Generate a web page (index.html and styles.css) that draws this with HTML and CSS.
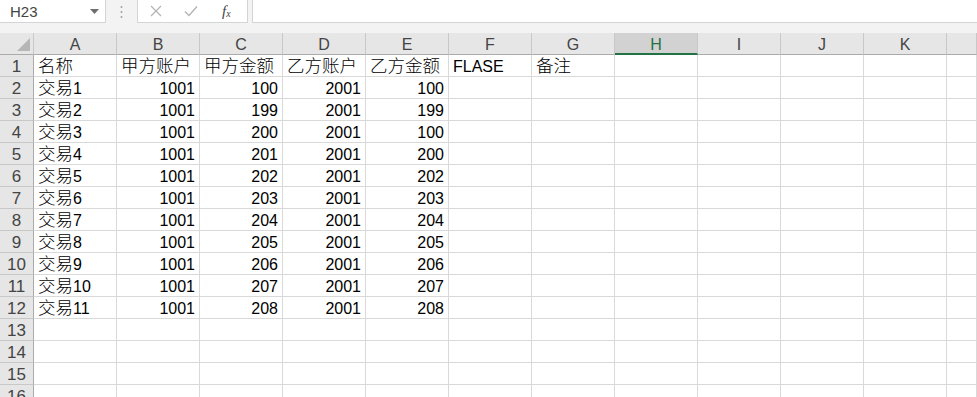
FILE: index.html
```html
<!DOCTYPE html>
<html lang="zh-CN">
<head>
    <meta charset="UTF-8">
    <meta name="viewport" content="width=device-width, initial-scale=1.0">
    <title>交易表 - Excel</title>
    <link rel="stylesheet" href="styles.css">
</head>
<body>
    <div class="formula-bar">
        <div class="name-box">
            <span class="name-text">H23</span>
            <svg class="drop" width="9" height="6" viewBox="0 0 9 6"><path d="M0 0h9L4.5 5z" fill="#6e6e6e"/></svg>
        </div>
        <div class="grip">
            <svg width="3" height="14" viewBox="0 0 3 14"><circle cx="1.5" cy="2" r="1" fill="#a0a0a0"/><circle cx="1.5" cy="7" r="1" fill="#a0a0a0"/><circle cx="1.5" cy="12" r="1" fill="#a0a0a0"/></svg>
        </div>
        <div class="fx-box">
            <svg class="btn" width="12" height="12" viewBox="0 0 12 12"><path d="M1 1l10 10M11 1L1 11" stroke="#b4b4b4" stroke-width="1.3" fill="none"/></svg>
            <svg class="btn" width="14" height="12" viewBox="0 0 14 12"><path d="M1 6.5l4 4L13 1.5" stroke="#b4b4b4" stroke-width="1.4" fill="none"/></svg>
            <span class="fx">f<sub>x</sub></span>
        </div>
        <div class="formula-input"></div>
    </div>

    <div class="sheet">
        <div class="row head">
            <div class="cell corner"><span class="tri"></span></div>
            <div class="cell col">A</div>
            <div class="cell col">B</div>
            <div class="cell col">C</div>
            <div class="cell col">D</div>
            <div class="cell col">E</div>
            <div class="cell col">F</div>
            <div class="cell col">G</div>
            <div class="cell col active">H</div>
            <div class="cell col">I</div>
            <div class="cell col">J</div>
            <div class="cell col">K</div>
            <div class="cell col"></div>
        </div>
        <div class="row">
            <div class="cell num">1</div>
            <div class="cell zh">名称</div>
            <div class="cell zh">甲方账户</div>
            <div class="cell zh">甲方金额</div>
            <div class="cell zh">乙方账户</div>
            <div class="cell zh">乙方金额</div>
            <div class="cell">FLASE</div>
            <div class="cell zh">备注</div>
            <div class="cell"></div><div class="cell"></div><div class="cell"></div><div class="cell"></div><div class="cell"></div>
        </div>
        <div class="row">
            <div class="cell num">2</div>
            <div class="cell"><span class="zh">交易</span>1</div>
            <div class="cell n">1001</div><div class="cell n">100</div><div class="cell n">2001</div><div class="cell n">100</div>
            <div class="cell"></div><div class="cell"></div><div class="cell"></div><div class="cell"></div><div class="cell"></div><div class="cell"></div><div class="cell"></div>
        </div>
        <div class="row">
            <div class="cell num">3</div>
            <div class="cell"><span class="zh">交易</span>2</div>
            <div class="cell n">1001</div><div class="cell n">199</div><div class="cell n">2001</div><div class="cell n">199</div>
            <div class="cell"></div><div class="cell"></div><div class="cell"></div><div class="cell"></div><div class="cell"></div><div class="cell"></div><div class="cell"></div>
        </div>
        <div class="row">
            <div class="cell num">4</div>
            <div class="cell"><span class="zh">交易</span>3</div>
            <div class="cell n">1001</div><div class="cell n">200</div><div class="cell n">2001</div><div class="cell n">100</div>
            <div class="cell"></div><div class="cell"></div><div class="cell"></div><div class="cell"></div><div class="cell"></div><div class="cell"></div><div class="cell"></div>
        </div>
        <div class="row">
            <div class="cell num">5</div>
            <div class="cell"><span class="zh">交易</span>4</div>
            <div class="cell n">1001</div><div class="cell n">201</div><div class="cell n">2001</div><div class="cell n">200</div>
            <div class="cell"></div><div class="cell"></div><div class="cell"></div><div class="cell"></div><div class="cell"></div><div class="cell"></div><div class="cell"></div>
        </div>
        <div class="row">
            <div class="cell num">6</div>
            <div class="cell"><span class="zh">交易</span>5</div>
            <div class="cell n">1001</div><div class="cell n">202</div><div class="cell n">2001</div><div class="cell n">202</div>
            <div class="cell"></div><div class="cell"></div><div class="cell"></div><div class="cell"></div><div class="cell"></div><div class="cell"></div><div class="cell"></div>
        </div>
        <div class="row">
            <div class="cell num">7</div>
            <div class="cell"><span class="zh">交易</span>6</div>
            <div class="cell n">1001</div><div class="cell n">203</div><div class="cell n">2001</div><div class="cell n">203</div>
            <div class="cell"></div><div class="cell"></div><div class="cell"></div><div class="cell"></div><div class="cell"></div><div class="cell"></div><div class="cell"></div>
        </div>
        <div class="row">
            <div class="cell num">8</div>
            <div class="cell"><span class="zh">交易</span>7</div>
            <div class="cell n">1001</div><div class="cell n">204</div><div class="cell n">2001</div><div class="cell n">204</div>
            <div class="cell"></div><div class="cell"></div><div class="cell"></div><div class="cell"></div><div class="cell"></div><div class="cell"></div><div class="cell"></div>
        </div>
        <div class="row">
            <div class="cell num">9</div>
            <div class="cell"><span class="zh">交易</span>8</div>
            <div class="cell n">1001</div><div class="cell n">205</div><div class="cell n">2001</div><div class="cell n">205</div>
            <div class="cell"></div><div class="cell"></div><div class="cell"></div><div class="cell"></div><div class="cell"></div><div class="cell"></div><div class="cell"></div>
        </div>
        <div class="row">
            <div class="cell num">10</div>
            <div class="cell"><span class="zh">交易</span>9</div>
            <div class="cell n">1001</div><div class="cell n">206</div><div class="cell n">2001</div><div class="cell n">206</div>
            <div class="cell"></div><div class="cell"></div><div class="cell"></div><div class="cell"></div><div class="cell"></div><div class="cell"></div><div class="cell"></div>
        </div>
        <div class="row">
            <div class="cell num">11</div>
            <div class="cell"><span class="zh">交易</span>10</div>
            <div class="cell n">1001</div><div class="cell n">207</div><div class="cell n">2001</div><div class="cell n">207</div>
            <div class="cell"></div><div class="cell"></div><div class="cell"></div><div class="cell"></div><div class="cell"></div><div class="cell"></div><div class="cell"></div>
        </div>
        <div class="row">
            <div class="cell num">12</div>
            <div class="cell"><span class="zh">交易</span>11</div>
            <div class="cell n">1001</div><div class="cell n">208</div><div class="cell n">2001</div><div class="cell n">208</div>
            <div class="cell"></div><div class="cell"></div><div class="cell"></div><div class="cell"></div><div class="cell"></div><div class="cell"></div><div class="cell"></div>
        </div>
        <div class="row">
            <div class="cell num">13</div>
            <div class="cell"></div><div class="cell"></div><div class="cell"></div><div class="cell"></div><div class="cell"></div><div class="cell"></div>
            <div class="cell"></div><div class="cell"></div><div class="cell"></div><div class="cell"></div><div class="cell"></div><div class="cell"></div>
        </div>
        <div class="row">
            <div class="cell num">14</div>
            <div class="cell"></div><div class="cell"></div><div class="cell"></div><div class="cell"></div><div class="cell"></div><div class="cell"></div>
            <div class="cell"></div><div class="cell"></div><div class="cell"></div><div class="cell"></div><div class="cell"></div><div class="cell"></div>
        </div>
        <div class="row">
            <div class="cell num">15</div>
            <div class="cell"></div><div class="cell"></div><div class="cell"></div><div class="cell"></div><div class="cell"></div><div class="cell"></div>
            <div class="cell"></div><div class="cell"></div><div class="cell"></div><div class="cell"></div><div class="cell"></div><div class="cell"></div>
        </div>
        <div class="row">
            <div class="cell num">16</div>
            <div class="cell"></div><div class="cell"></div><div class="cell"></div><div class="cell"></div><div class="cell"></div><div class="cell"></div>
            <div class="cell"></div><div class="cell"></div><div class="cell"></div><div class="cell"></div><div class="cell"></div><div class="cell"></div>
        </div>
    </div>
</body>
</html>
```

FILE: styles.css
```css
body {
    margin: 0;
    width: 977px;
    height: 397px;
    overflow: hidden;
    background: #ffffff;
    font-family: 'Liberation Sans', 'Noto Sans CJK SC', sans-serif;
    font-size: 16px;
    color: #000;
}

/* formula bar */
.formula-bar {
    display: flex;
    height: 33px;
    box-sizing: border-box;
    padding-bottom: 10px;
    background: #f3f3f3;
}

.name-box {
    width: 106px;
    box-sizing: border-box;
    background: #fff;
    border-right: 1px solid #d4d4d4;
    border-bottom: 1px solid #d4d4d4;
    display: flex;
    align-items: center;
    justify-content: space-between;
    padding: 0 6px 0 10px;
}

.name-text {
    color: #444;
    font-size: 15px;
}

.drop {
    margin-top: 1px;
}

.grip {
    width: 31px;
    display: flex;
    align-items: center;
    justify-content: center;
}

.fx-box {
    width: 111px;
    box-sizing: border-box;
    background: #fff;
    border: 1px solid #d4d4d4;
    border-top: none;
    display: flex;
    align-items: center;
    padding-left: 12px;
    gap: 22px;
}

.fx {
    font-family: 'Liberation Serif', serif;
    font-style: italic;
    font-size: 15px;
    color: #444;
    margin-left: 2px;
}

    .fx sub {
        font-size: 10px;
        vertical-align: -1px;
    }

.formula-input {
    flex: 1;
    margin-left: 4px;
    background: #fff;
    border-left: 1px solid #d4d4d4;
    border-bottom: 1px solid #d4d4d4;
}

/* grid */
.row {
    display: grid;
    grid-template-columns: 34px repeat(11, 83px) 1fr;
    height: 22px;
}

.cell {
    box-sizing: border-box;
    height: 22px;
    border-right: 1px solid #d9d9d9;
    border-bottom: 1px solid #d9d9d9;
    padding: 0 4px;
    line-height: 23px;
    white-space: nowrap;
    overflow: hidden;
}

.zh {
    font-size: 17.5px;
    font-weight: 300;
}

.n {
    text-align: right;
    padding-right: 4px;
}

.head .cell {
    background: #e6e6e6;
    border-right-color: #c8c8c8;
    border-bottom-color: #ababab;
    color: #444;
    text-align: center;
    line-height: 24px;
}

.head .active {
    background: #d2d2d2;
    border-bottom: 2px solid #217346;
    color: #217346;
}

.corner {
    position: relative;
}

.tri {
    position: absolute;
    right: 3px;
    bottom: 3px;
    width: 0;
    height: 0;
    border-left: 13px solid transparent;
    border-bottom: 13px solid #b6b6b6;
}

.num {
    background: #e6e6e6;
    border-right-color: #ababab;
    border-bottom-color: #c8c8c8;
    color: #444;
    text-align: center;
    padding: 0;
    font-size: 17px;
}
```
